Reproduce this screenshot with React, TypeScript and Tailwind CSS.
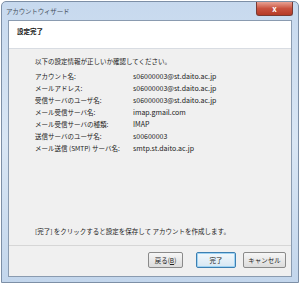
const rows = [
  { label: 'アカウント名:', value: 's06000003@st.daito.ac.jp' },
  { label: 'メールアドレス:', value: 's06000003@st.daito.ac.jp' },
  { label: '受信サーバのユーザ名:', value: 's06000003@st.daito.ac.jp' },
  { label: 'メール受信サーバ名:', value: 'imap.gmail.com' },
  { label: 'メール受信サーバの種類:', value: 'IMAP' },
  { label: '送信サーバのユーザ名:', value: 's00600003' },
  { label: 'メール送信 (SMTP) サーバ名:', value: 'smtp.st.daito.ac.jp' },
];

const font = { fontFamily: '"Noto Sans CJK JP", "Liberation Sans", sans-serif' };

export default function App() {
  return (
    <div className="w-[300px] h-[285px] bg-white p-px text-[6.5px] leading-[12px]" style={font}>
      <div className="w-[298px] h-[282px] flex flex-col rounded-t-[5px] border border-[#7d8fa6] bg-gradient-to-b from-[#c7d9ee] via-[#d9e6f4] to-[#c3d6ec]">
        {/* title bar */}
        <div className="h-[18px] flex items-start pl-[4px] pr-[5px]">
          <span className="text-[#46505c] mt-[3px] tracking-tight">アカウントウィザード</span>
          <div className="ml-auto w-[37px] h-[14px] rounded-b-[3px] border border-[#7a3a32] border-t-0 bg-gradient-to-b from-[#e8a193] via-[#c9523f] to-[#b53a26] flex items-center justify-center">
            <span className="text-[8px] font-bold text-white leading-none">x</span>
          </div>
        </div>

        {/* client area */}
        <div className="mx-[6px] flex-1 flex flex-col border border-[#8a9bb0] bg-[#f0f0f0]">
          <div className="h-[28px] bg-white border-b border-[#d8dce2] pl-[8px] pt-[4px]">
            <span className="font-bold text-[#111]">設定完了</span>
          </div>

          <div className="flex-1 flex flex-col pl-[26px] pt-[6px] text-[#1a1a1a]">
            <div>以下の設定情報が正しいか確認してください。</div>
            <div className="mt-[3px] flex flex-col">
              {rows.map(r => (
                <div key={r.label} className="flex">
                  <span className="w-[98px]">{r.label}</span>
                  <span className="text-[7px]">{r.value}</span>
                </div>
              ))}
            </div>
            <div className="mt-auto mb-[8px]">
              [完了] をクリックすると設定を保存して アカウントを作成します。
            </div>
          </div>

          <div className="h-[31px] border-t border-[#d6d6d6] flex items-start justify-end pt-[6px] pr-[5px]">
            <button className="w-[35px] h-[16px] rounded-[2px] border border-[#8a8a8a] bg-gradient-to-b from-[#f6f6f6] to-[#dcdcdc] text-[#222]">
              戻る(<span className="underline">B</span>)
            </button>
            <button className="ml-[13px] w-[40px] h-[16px] rounded-[2px] border border-[#3c7fb1] bg-gradient-to-b from-[#f2f8fc] to-[#d6e7f3] text-[#222] shadow-[inset_0_0_0_1px_#9fd3f3]">
              完了
            </button>
            <button className="ml-[7px] w-[43px] h-[16px] rounded-[2px] border border-[#8a8a8a] bg-gradient-to-b from-[#f6f6f6] to-[#dcdcdc] text-[#222]">
              キャンセル
            </button>
          </div>
        </div>
        <div className="h-[5px]" />
      </div>
    </div>
  );
}
